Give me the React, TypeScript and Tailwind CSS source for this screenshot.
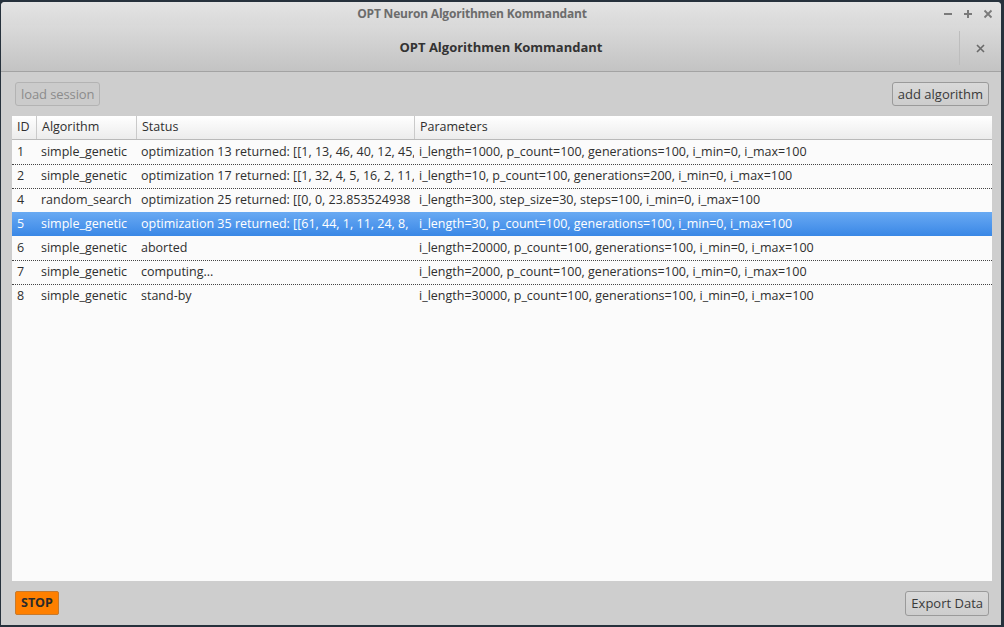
import React from "react";

const rows = [
  { id: "1", alg: "simple_genetic", status: "optimization 13 returned: [[1, 13, 46, 40, 12, 45,", params: "i_length=1000, p_count=100, generations=100, i_min=0, i_max=100" },
  { id: "2", alg: "simple_genetic", status: "optimization 17 returned: [[1, 32, 4, 5, 16, 2, 11,", params: "i_length=10, p_count=100, generations=200, i_min=0, i_max=100" },
  { id: "4", alg: "random_search", status: "optimization 25 returned: [[0, 0, 23.853524938", params: "i_length=300, step_size=30, steps=100, i_min=0, i_max=100" },
  { id: "5", alg: "simple_genetic", status: "optimization 35 returned: [[61, 44, 1, 11, 24, 8,", params: "i_length=30, p_count=100, generations=100, i_min=0, i_max=100", sel: true },
  { id: "6", alg: "simple_genetic", status: "aborted", params: "i_length=20000, p_count=100, generations=100, i_min=0, i_max=100" },
  { id: "7", alg: "simple_genetic", status: "computing...", params: "i_length=2000, p_count=100, generations=100, i_min=0, i_max=100" },
  { id: "8", alg: "simple_genetic", status: "stand-by", params: "i_length=30000, p_count=100, generations=100, i_min=0, i_max=100" },
];

const font = { fontFamily: '"Open Sans", "Noto Sans", sans-serif' };

export default function App() {
  return (
    <div
      className="w-[1004px] h-[627px] bg-[#26313c] pl-[1px] pt-[2px] pr-[3px] pb-[2px] overflow-hidden"
      style={font}
    >
      <div className="w-full h-full flex flex-col rounded-t-[4px] overflow-hidden bg-[#cecece]">
        {/* Title bar */}
        <div className="h-[23px] flex items-center bg-gradient-to-b from-[#e4e4e4] to-[#d9d9d9] shrink-0">
          <div className="flex-1 text-center text-[12px] font-bold text-[#6c6c6c] tracking-[-0.2px]">
            OPT Neuron Algorithmen Kommandant
          </div>
          <div className="w-[58px] flex items-center justify-between pr-[8px] text-[#777]">
            <svg width="10" height="10" viewBox="0 0 10 10"><path d="M1 5h8" stroke="#7a7a7a" strokeWidth="2" /></svg>
            <svg width="10" height="10" viewBox="0 0 10 10"><path d="M1 5h8M5 1v8" stroke="#7a7a7a" strokeWidth="2" /></svg>
            <svg width="10" height="10" viewBox="0 0 10 10"><path d="M1.5 1.5l7 7M8.5 1.5l-7 7" stroke="#7a7a7a" strokeWidth="1.8" /></svg>
          </div>
        </div>
        {/* Header bar */}
        <div className="h-[47px] grid grid-cols-[42px_1fr_42px] items-center bg-gradient-to-b from-[#dadada] to-[#c3c3c3] border-b border-[#a3a3a3] shrink-0">
          <div />
          <div className="text-center text-[13px] font-bold text-[#333]">OPT Algorithmen Kommandant</div>
          <div className="h-[34px] border-l border-[#bdbdbd] flex items-center justify-center">
            <svg width="9" height="9" viewBox="0 0 9 9"><path d="M1 1l7 7M8 1l-7 7" stroke="#6a6a6a" strokeWidth="1.6" /></svg>
          </div>
        </div>
        {/* Content */}
        <div className="flex-1 flex flex-col min-h-0">
          <div className="flex justify-between items-center pl-[14px] pr-[12px] pt-[10px] pb-[10px]">
            <button className="h-[24px] px-[5px] rounded-[3px] border border-[#b3b3b3] bg-[#cbcbcb] text-[13px] text-[#8c8c8c] leading-none tracking-[-0.1px]">
              load session
            </button>
            <button className="h-[24px] px-[5px] rounded-[3px] border border-[#9a9a9a] bg-gradient-to-b from-[#d9d9d9] to-[#cdcdcd] text-[13px] text-[#3a3a3a] leading-none">
              add algorithm
            </button>
          </div>
          <div className="flex-1 ml-[11px] mr-[9px] bg-[#fbfbfb] min-h-0 overflow-hidden text-[12.5px] text-[#2f2f2f]">
            <div className="h-[24px] grid grid-cols-[24px_100px_278px_1fr] bg-gradient-to-b from-[#ffffff] to-[#ececec] border-b border-[#b9b9b9]">
              <div className="px-[5px] flex items-center">ID</div>
              <div className="px-[5px] flex items-center border-l border-[#cacaca]">Algorithm</div>
              <div className="px-[5px] flex items-center border-l border-[#cacaca]">Status</div>
              <div className="px-[5px] flex items-center border-l border-[#cacaca]">Parameters</div>
            </div>
            {rows.map((r, i) => {
              const prevSel = i > 0 && rows[i - 1].sel;
              const dotted = i > 0 && !r.sel && !prevSel;
              return (
                <div
                  key={r.id}
                  className={
                    "h-[24px] grid grid-cols-[24px_100px_278px_1fr] items-center whitespace-nowrap " +
                    (r.sel ? "bg-gradient-to-b from-[#69aaf3] to-[#3987e6] text-white " : "") +
                    (dotted ? "border-t border-dotted border-[#444]" : "")
                  }
                >
                  <div className="px-[5px] overflow-hidden">{r.id}</div>
                  <div className="px-[5px] overflow-hidden">{r.alg}</div>
                  <div className="pl-[5px] overflow-hidden">{r.status}</div>
                  <div className="px-[5px] overflow-hidden">{r.params}</div>
                </div>
              );
            })}
          </div>
          <div className="h-[44px] flex justify-between items-center pl-[14px] pr-[12px] shrink-0">
            <button className="h-[24px] px-[5px] rounded-[2px] border border-[#c77a2e] bg-[#ff8000] text-[12.5px] font-bold text-[#2a2a2a] leading-none">
              STOP
            </button>
            <button className="h-[25px] px-[5px] rounded-[3px] border border-[#9a9a9a] bg-gradient-to-b from-[#d9d9d9] to-[#cdcdcd] text-[13px] text-[#3a3a3a] leading-none">
              Export Data
            </button>
          </div>
        </div>
      </div>
    </div>
  );
}
